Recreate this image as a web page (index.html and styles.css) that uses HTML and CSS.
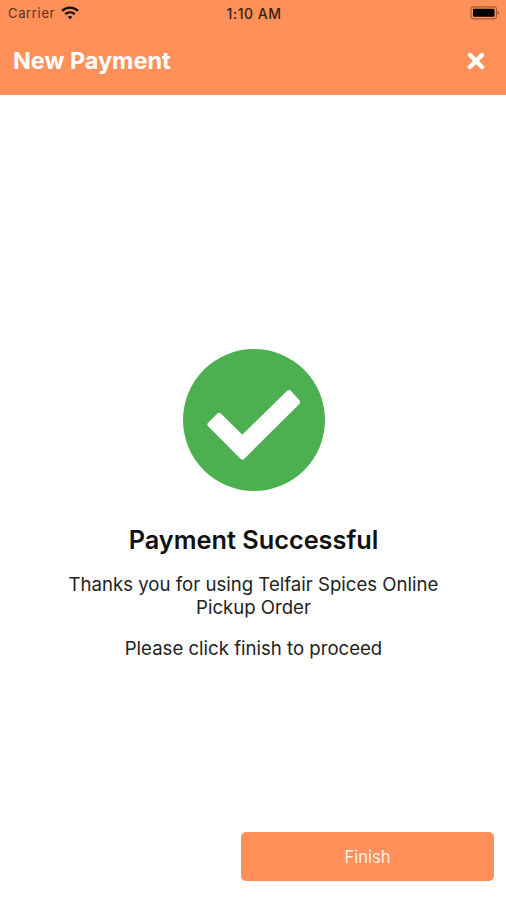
FILE: index.html
```html
<!DOCTYPE html>
<html lang="en">
<head>
  <meta charset="UTF-8" />
  <meta name="viewport" content="width=device-width, initial-scale=1.0" />
  <title>New Payment</title>
  <link rel="stylesheet" href="styles.css">
</head>
<body>
  <div class="screen">
    <header class="header">
      <div class="status-bar">
        <div class="carrier">
          <span class="carrier-name">Carrier</span>
          <svg class="wifi" viewBox="0 0 18 14" fill="none" stroke="#111" stroke-width="2.4">
            <path d="M1 4.8C5.5 .5 12.5 .5 17 4.8" />
            <path d="M4.2 8.2C7 5.7 11 5.7 13.8 8.2" />
            <path d="M9 13.2L6.6 10.8Q9 9 11.4 10.8Z" fill="#111" stroke="none" />
          </svg>
        </div>
        <span class="time">1:10 AM</span>
        <svg class="battery" viewBox="0 0 30 14">
          <rect x="1" y=".8" width="25.5" height="12" rx="2.5" fill="none" stroke="#a65c39" stroke-width="1.2" />
          <rect x="3" y="2.8" width="21.5" height="8" rx="1" fill="#000" />
          <path d="M27.5 4.5Q31 6.8 27.5 9.1Z" fill="#a65c39" />
        </svg>
      </div>
      <div class="title-bar">
        <h1>New Payment</h1>
        <button class="close-btn" aria-label="Close">
          <svg viewBox="0 0 18 18" stroke="#fff" stroke-width="4.4" stroke-linecap="round">
            <path d="M3 3L15 15M15 3L3 15" />
          </svg>
        </button>
      </div>
    </header>

    <main class="content">
      <svg class="success-icon" viewBox="0 0 142 142">
        <circle cx="71" cy="71" r="71" fill="#4caf50" />
        <path d="M27.5 75.5L36 67L59.3 90L106 44.2L114 53L59.3 107.5Z" fill="#fff" stroke="#fff" stroke-width="6" stroke-linejoin="round" />
      </svg>
      <h2>Payment Successful</h2>
      <p>Thanks you for using Telfair Spices Online<br>Pickup Order</p>
      <p>Please click finish to proceed</p>
    </main>

    <footer class="footer">
      <button class="finish-btn">Finish</button>
    </footer>
  </div>
</body>
</html>
```
FILE: styles.css
```css
:root {
  --primary-color: #ff9059;
  --text-color: #111;
}

* {
  box-sizing: border-box;
}

body {
  margin: 0;
  font-family: Inter, "Liberation Sans", sans-serif;
  color: var(--text-color);
  background: white;
}

.screen {
  display: flex;
  flex-direction: column;
  height: 100vh;
  overflow: hidden;
}

.header {
  height: 95px;
  background: var(--primary-color);
}

.status-bar {
  display: grid;
  grid-template-columns: 1fr auto 1fr;
  align-items: center;
  height: 26px;
  padding: 0 6px 0 8px;
  font-size: 13px;
}

.carrier {
  display: flex;
  align-items: center;
  gap: 6px;
}

.carrier-name {
  color: #5b3320;
  letter-spacing: 0.65px;
}

.wifi {
  width: 18px;
  height: 14px;
}

.time {
  font-size: 14px;
  font-weight: 500;
  letter-spacing: 0.5px;
  color: #3a2014;
}

.battery {
  width: 30px;
  height: 14px;
  justify-self: end;
}

.title-bar {
  display: flex;
  justify-content: space-between;
  align-items: center;
  height: 69px;
  padding: 0 21px 0 13px;
}

h1 {
  margin: 0;
  font-size: 23.5px;
  font-weight: 700;
  letter-spacing: -0.05px;
  color: white;
}

.close-btn {
  padding: 0;
  border: none;
  background: none;
  cursor: pointer;
}

.close-btn svg {
  display: block;
  width: 18px;
  height: 18px;
}

.content {
  flex: 1;
  display: flex;
  flex-direction: column;
  align-items: center;
  padding: 254px 0 0 1px;
  text-align: center;
}

.success-icon {
  width: 142px;
  height: 142px;
}

h2 {
  margin: 33px 0 17px;
  font-size: 25.3px;
  line-height: 32px;
  font-weight: 600;
}

p {
  margin: 0 0 18px;
  font-size: 18.6px;
  line-height: 23px;
  color: #222;
}

.footer {
  display: flex;
  justify-content: flex-end;
  padding: 0 12px 19px;
}

.finish-btn {
  width: 253px;
  height: 49px;
  border: none;
  border-radius: 5px;
  background: var(--primary-color);
  color: #fff1ea;
  font-family: inherit;
  font-size: 16.6px;
  cursor: pointer;
}
```
